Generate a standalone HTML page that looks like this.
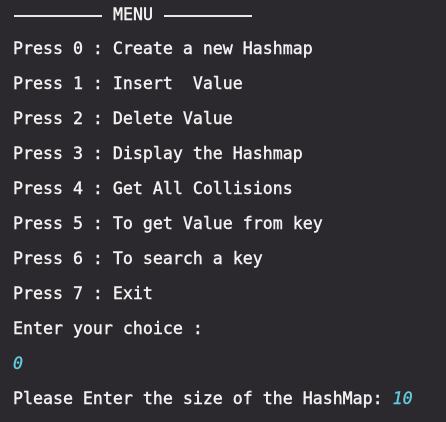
<!DOCTYPE html>
<html><head><style>
html,body{margin:0;padding:0;background:#2b292d;width:446px;height:422px;overflow:hidden}
.l{position:absolute;left:13px;font-family:"DejaVu Sans Mono","Liberation Mono",monospace;font-size:16.6px;color:#f2f2f2;white-space:pre;line-height:20px;font-weight:normal;-webkit-text-stroke:0.4px #f2f2f2}
.c{color:#62c9dc;font-style:italic;-webkit-text-stroke:0.4px #62c9dc}
.d{position:absolute;height:1.5px;background:#e8e8e8;top:15px}
</style></head><body>
<div class="d" style="left:14px;width:88px"></div>
<div class="l" style="top:5px;left:113px">MENU</div>
<div class="d" style="left:164px;width:88px"></div>
<div class="l" style="top:39px">Press 0 : Create a new Hashmap</div>
<div class="l" style="top:74px">Press 1 : Insert  Value</div>
<div class="l" style="top:109px">Press 2 : Delete Value</div>
<div class="l" style="top:144px">Press 3 : Display the Hashmap</div>
<div class="l" style="top:179px">Press 4 : Get All Collisions</div>
<div class="l" style="top:214px">Press 5 : To get Value from key</div>
<div class="l" style="top:249px">Press 6 : To search a key</div>
<div class="l" style="top:284px">Press 7 : Exit</div>
<div class="l" style="top:319px">Enter your choice :</div>
<div class="l c" style="top:354px">0</div>
<div class="l" style="top:389px">Please Enter the size of the HashMap: <span class="c">10</span></div>
</body></html>
